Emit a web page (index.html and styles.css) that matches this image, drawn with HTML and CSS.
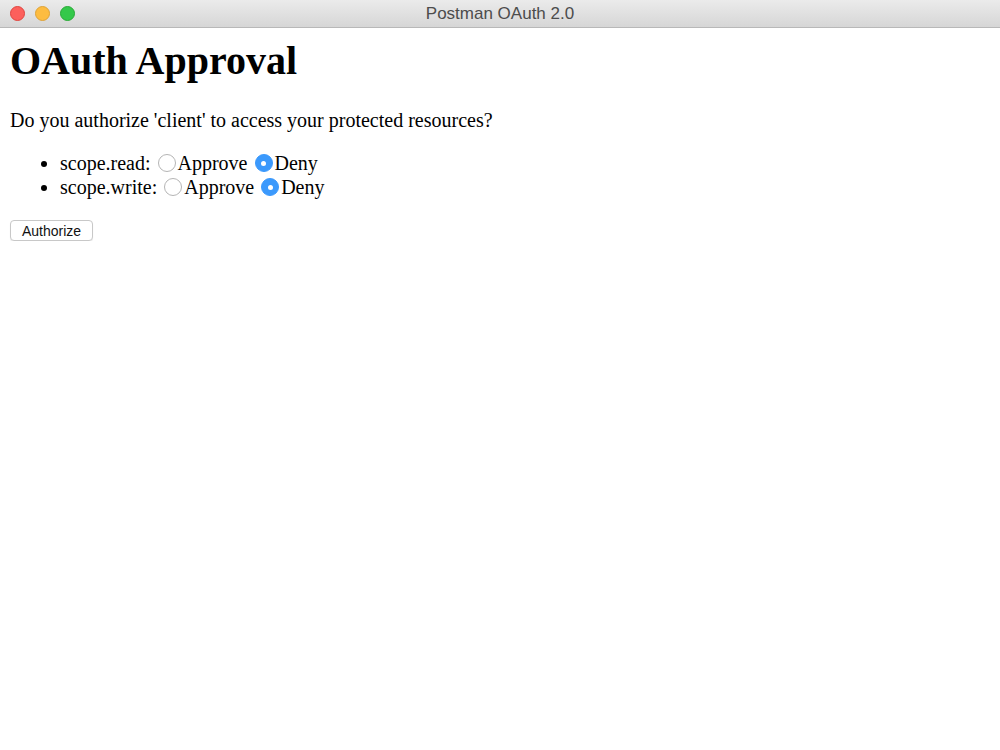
FILE: index.html
```html
<!DOCTYPE html>
<html lang="en">
<head>
  <meta charset="UTF-8" />
  <title>Postman OAuth 2.0</title>
  <link rel="stylesheet" href="styles.css">
</head>
<body>

  <div class="titlebar">
    <div class="lights">
      <span class="light close"></span>
      <span class="light min"></span>
      <span class="light max"></span>
    </div>
    <div class="title">Postman OAuth 2.0</div>
  </div>

  <div class="page">
    <h1>OAuth Approval</h1>
    <p>Do you authorize 'client' to access your protected resources?</p>

    <form>
      <ul>
        <li>scope.read: <input type="radio" name="read" value="approve"><label>Approve</label> <input type="radio" name="read" value="deny" checked><label>Deny</label></li>
        <li>scope.write: <input type="radio" name="write" value="approve"><label>Approve</label> <input type="radio" name="write" value="deny" checked><label>Deny</label></li>
      </ul>
      <button type="button">Authorize</button>
    </form>
  </div>

</body>
</html>
```

FILE: styles.css
```css
* {
  box-sizing: border-box;
}

body {
  margin: 0;
  background: #ffffff;
  font-family: "Liberation Serif", "Times New Roman", serif;
  color: #000;
}

.titlebar {
  position: relative;
  height: 28px;
  background: linear-gradient(to bottom, #ebebeb, #d6d6d6);
  border-bottom: 1px solid #b8b8b8;
  display: flex;
  align-items: center;
  justify-content: center;
}

.lights {
  position: absolute;
  left: 10px;
  top: 6px;
  display: flex;
  gap: 10px;
}

.light {
  width: 15px;
  height: 15px;
  border-radius: 50%;
}

.light.close { background: #fc605c; border: 1px solid #e0443e; }
.light.min { background: #fdbc40; border: 1px solid #dea236; }
.light.max { background: #34c84a; border: 1px solid #27aa35; }

.title {
  font-family: "Liberation Sans", Arial, sans-serif;
  font-size: 17px;
  color: #4c4c4c;
}

.page {
  padding: 0 10px;
}

h1 {
  font-size: 40px;
  font-weight: bold;
  margin: 9px 0 25px;
}

p {
  font-size: 20px;
  margin: 0 0 19px;
}

ul {
  font-size: 20px;
  margin: 0 0 21px;
  padding-left: 50px;
}

li {
  line-height: 24px;
}

input[type="radio"] {
  appearance: none;
  -webkit-appearance: none;
  width: 18px;
  height: 18px;
  margin: 0 2px 0 2px;
  border: 1px solid #b5b5b5;
  border-radius: 50%;
  background: #fff;
  vertical-align: -2px;
  position: relative;
}

input[type="radio"]:checked {
  background: #3b99fc;
  border-color: #3b99fc;
}

input[type="radio"]:checked::after {
  content: "";
  position: absolute;
  left: 5.5px;
  top: 5.5px;
  width: 5px;
  height: 5px;
  border-radius: 50%;
  background: #fff;
}

button {
  font-family: "Liberation Sans", Arial, sans-serif;
  font-size: 14px;
  color: #111;
  background: #fff;
  border: 1px solid #c8c8c8;
  border-radius: 4px;
  height: 21px;
  padding: 0 11px;
  box-shadow: 0 1px 1px rgba(0,0,0,0.08);
}
```
